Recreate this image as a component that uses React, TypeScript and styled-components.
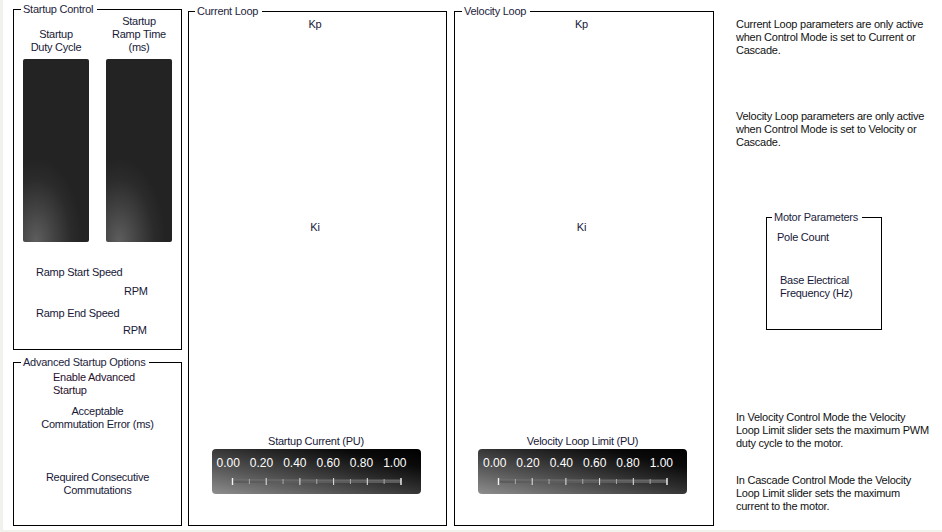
import React from 'react';
import styled, { createGlobalStyle } from 'styled-components';

const Global = createGlobalStyle`
  html, body { margin: 0; padding: 0; background: #f2f2ed; }
  body { font-family: "Liberation Sans", Arial, sans-serif; font-size: 11px; }
`;

const Window = styled.div`
  width: 939px;
  height: 530px;
  margin-left: 3px;
  background: #ffffff;
  display: flex;
  align-items: flex-start;
  padding-left: 10px;
  box-sizing: border-box;
  overflow: hidden;
  font-family: "Liberation Sans", Arial, sans-serif;
  font-size: 11px;
  line-height: 13px;
  letter-spacing: -0.25px;
  color: #181838;
`;

const Group = styled.div<{ $w: number; $h: number }>`
  position: relative;
  box-sizing: border-box;
  width: ${p => p.$w}px;
  height: ${p => p.$h}px;
  border: 1px solid #000;
  flex-shrink: 0;
`;

const GroupTitle = styled.span<{ $x: number }>`
  position: absolute;
  top: -7px;
  left: ${p => p.$x}px;
  background: #fff;
  padding: 0 4px 0 2px;
  line-height: 13px;
  color: #1e1e3e;
  white-space: nowrap;
`;

const LeftCol = styled.div`
  display: flex;
  flex-direction: column;
  gap: 12px;
  margin-top: 9px;
  width: 169px;
  flex-shrink: 0;
`;

const SliderRow = styled.div`
  display: flex;
  align-items: flex-end;
  gap: 17px;
  padding: 5px 0 0 9px;
`;

const SliderCol = styled.div`
  display: flex;
  flex-direction: column;
  align-items: center;
  gap: 5px;
  width: 66px;
`;

const CenterLabel = styled.div<{ $mt?: number }>`
  margin-top: ${p => p.$mt ?? 0}px;
  text-align: center;
  white-space: nowrap;
`;

const VSlider = styled.div`
  width: 66px;
  height: 183px;
  border-radius: 2px;
  background:
    radial-gradient(ellipse 70% 46% at 20% 100%, #5e5e5e 0%, #424242 40%, #2b2b2b 75%, rgba(36,36,36,0) 100%),
    #232323;
`;

const FieldLabel = styled.div<{ $x: number; $mt: number; $dark?: boolean }>`
  margin: ${p => p.$mt}px 0 0 ${p => p.$x}px;
  white-space: nowrap;
  color: ${p => (p.$dark ? '#2a0f2e' : 'inherit')};
`;

const LoopBox = styled(Group)`
  margin-top: 11px;
  margin-left: ${p => (p.$w === 259 ? 6 : 7)}px;
  display: flex;
  flex-direction: column;
  align-items: center;
  padding-bottom: 31px;
`;

const ParamLabel = styled.div<{ $mt: number }>`
  margin-top: ${p => p.$mt}px;
  margin-right: 5px;
  white-space: nowrap;
`;

const SliderSection = styled.div`
  margin-top: auto;
  margin-right: 3px;
  display: flex;
  flex-direction: column;
  align-items: center;
`;

const SliderCaption = styled.div`
  margin-bottom: 1px;
  white-space: nowrap;
`;

const HSlider = styled.div`
  width: 209px;
  height: 45px;
  border-radius: 4px;
  box-sizing: border-box;
  padding-top: 7px;
  background: linear-gradient(to top right, #8e8e8e 0%, #555 32%, #2a2a2a 58%, #0a0a0a 80%, #000 100%);
`;

const ScaleLabels = styled.div`
  display: flex;
  justify-content: space-between;
  margin: 0 14px 0 5px;
  font-size: 12px;
  line-height: 14px;
  letter-spacing: 0;
  color: #ffffff;
`;

const Track = styled.svg`
  display: block;
  margin-top: 7px;
`;

const Notes = styled.div`
  display: flex;
  flex-direction: column;
  margin-left: 22px;
  color: #121212;
  flex-shrink: 0;
`;

const Note = styled.p<{ $mt: number }>`
  margin: ${p => p.$mt}px 0 0;
  white-space: nowrap;
  line-height: 13px;
`;

const MotorBox = styled(Group)`
  margin: 68px 0 0 30px;
  color: #181838;
`;

const scale = ['0.00', '0.20', '0.40', '0.60', '0.80', '1.00'];

function ScaleTrack() {
  const start = 20.5;
  const step = 33.7;
  const ticks: React.ReactNode[] = [];
  for (let i = 0; i <= 10; i++) {
    const x = start + (step / 2) * i;
    const major = i % 2 === 0;
    const end = i === 0 || i === 10;
    ticks.push(
      <line
        key={i}
        x1={x}
        x2={x}
        y1={major ? 1 : 2}
        y2={major ? 8 : 7}
        stroke={major ? (end ? '#f4f4f4' : '#e6e6e6') : '#a8a8a8'}
        strokeWidth={end ? 1.4 : 1}
      />
    );
  }
  return (
    <Track width="209" height="10" viewBox="0 0 209 10">
      <rect x={start} y={3} width={step * 5} height={3} fill="#5c5c5c" />
      <line x1={start} x2={start + step * 5} y1={3} y2={3} stroke="#777" strokeWidth={0.8} />
      {ticks}
    </Track>
  );
}

function ScaleSlider({ caption }: { caption: string }) {
  return (
    <SliderSection>
      <SliderCaption>{caption}</SliderCaption>
      <HSlider>
        <ScaleLabels>
          {scale.map(s => (
            <span key={s}>{s}</span>
          ))}
        </ScaleLabels>
        <ScaleTrack />
      </HSlider>
    </SliderSection>
  );
}

export default function App() {
  return (
    <>
      <Global />
      <Window>
        <LeftCol>
          <Group $w={169} $h={341}>
            <GroupTitle $x={7}>Startup Control</GroupTitle>
            <SliderRow>
              <SliderCol>
                <CenterLabel>
                  Startup
                  <br />
                  Duty Cycle
                </CenterLabel>
                <VSlider />
              </SliderCol>
              <SliderCol>
                <CenterLabel>
                  Startup
                  <br />
                  Ramp Time
                  <br />
                  (ms)
                </CenterLabel>
                <VSlider />
              </SliderCol>
            </SliderRow>
            <FieldLabel $x={22} $mt={24}>Ramp Start Speed</FieldLabel>
            <FieldLabel $x={110} $mt={6}>RPM</FieldLabel>
            <FieldLabel $x={22} $mt={9}>Ramp End Speed</FieldLabel>
            <FieldLabel $x={109} $mt={4}>RPM</FieldLabel>
          </Group>
          <Group $w={169} $h={164}>
            <GroupTitle $x={7}>Advanced Startup Options</GroupTitle>
            <FieldLabel $x={39} $mt={7.5} $dark>
              Enable Advanced
              <br />
              Startup
            </FieldLabel>
            <CenterLabel $mt={8}>
              Acceptable
              <br />
              Commutation Error (ms)
            </CenterLabel>
            <CenterLabel $mt={40}>
              Required Consecutive
              <br />
              Commutations
            </CenterLabel>
          </Group>
        </LeftCol>

        <LoopBox $w={259} $h={515}>
          <GroupTitle $x={6}>Current Loop</GroupTitle>
          <ParamLabel $mt={6}>Kp</ParamLabel>
          <ParamLabel $mt={190}>Ki</ParamLabel>
          <ScaleSlider caption="Startup Current (PU)" />
        </LoopBox>

        <LoopBox $w={260} $h={515}>
          <GroupTitle $x={7}>Velocity Loop</GroupTitle>
          <ParamLabel $mt={6}>Kp</ParamLabel>
          <ParamLabel $mt={190}>Ki</ParamLabel>
          <ScaleSlider caption="Velocity Loop Limit (PU)" />
        </LoopBox>

        <Notes>
          <Note $mt={17.5}>
            Current Loop parameters are only active
            <br />
            when Control Mode is set to Current or
            <br />
            Cascade.
          </Note>
          <Note $mt={53.5}>
            Velocity Loop parameters are only active
            <br />
            when Control Mode is set to Velocity or
            <br />
            Cascade.
          </Note>
          <MotorBox $w={116} $h={113}>
            <GroupTitle $x={5}>Motor Parameters</GroupTitle>
            <FieldLabel $x={10} $mt={13}>Pole Count</FieldLabel>
            <FieldLabel $x={13} $mt={29.5}>
              Base Electrical
              <br />
              Frequency (Hz)
            </FieldLabel>
          </MotorBox>
          <Note $mt={81}>
            In Velocity Control Mode the Velocity
            <br />
            Loop Limit slider sets the maximum PWM
            <br />
            duty cycle to the motor.
          </Note>
          <Note $mt={23.5}>
            In Cascade Control Mode the Velocity
            <br />
            Loop Limit slider sets the maximum
            <br />
            current to the motor.
          </Note>
        </Notes>
      </Window>
    </>
  );
}
